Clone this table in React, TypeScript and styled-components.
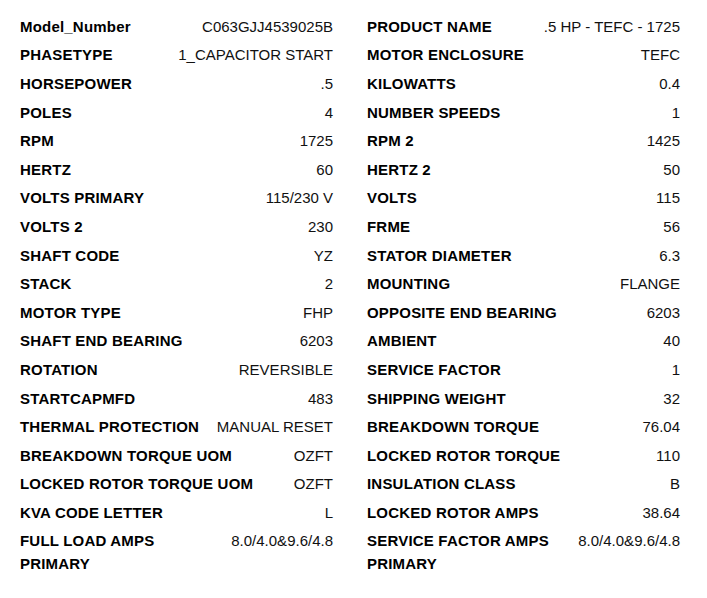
import React from "react";
import styled, { createGlobalStyle } from "styled-components";

const GlobalStyle = createGlobalStyle`
  body {
    margin: 0;
    background: #fff;
    font-family: "Liberation Sans", Arial, sans-serif;
  }
`;

const SpecSheet = styled.section`
  display: grid;
  grid-template-columns: 313px 313px;
  column-gap: 34px;
  padding: 12px 0 0 20px;
  width: 707px;
  box-sizing: border-box;
`;

const SpecColumn = styled.div`
  display: flex;
  flex-direction: column;
`;

const SpecRow = styled.div`
  display: flex;
  justify-content: space-between;
  align-items: flex-start;
  gap: 12px;
  padding: 2.8px 0;
  font-size: 15px;
  line-height: 23px;
`;

const SpecLabel = styled.span`
  font-weight: 700;
  color: #000;
  letter-spacing: 0.2px;
`;

const SpecValue = styled.span`
  color: #111;
  text-align: right;
  white-space: nowrap;
`;

type Spec = [string, string];

const left: Spec[] = [
  ["Model_Number", "C063GJJ4539025B"],
  ["PHASETYPE", "1_CAPACITOR START"],
  ["HORSEPOWER", ".5"],
  ["POLES", "4"],
  ["RPM", "1725"],
  ["HERTZ", "60"],
  ["VOLTS PRIMARY", "115/230 V"],
  ["VOLTS 2", "230"],
  ["SHAFT CODE", "YZ"],
  ["STACK", "2"],
  ["MOTOR TYPE", "FHP"],
  ["SHAFT END BEARING", "6203"],
  ["ROTATION", "REVERSIBLE"],
  ["STARTCAPMFD", "483"],
  ["THERMAL PROTECTION", "MANUAL RESET"],
  ["BREAKDOWN TORQUE UOM", "OZFT"],
  ["LOCKED ROTOR TORQUE UOM", "OZFT"],
  ["KVA CODE LETTER", "L"],
  ["FULL LOAD AMPS PRIMARY", "8.0/4.0&9.6/4.8"],
];

const right: Spec[] = [
  ["PRODUCT NAME", ".5 HP - TEFC - 1725"],
  ["MOTOR ENCLOSURE", "TEFC"],
  ["KILOWATTS", "0.4"],
  ["NUMBER SPEEDS", "1"],
  ["RPM 2", "1425"],
  ["HERTZ 2", "50"],
  ["VOLTS", "115"],
  ["FRME", "56"],
  ["STATOR DIAMETER", "6.3"],
  ["MOUNTING", "FLANGE"],
  ["OPPOSITE END BEARING", "6203"],
  ["AMBIENT", "40"],
  ["SERVICE FACTOR", "1"],
  ["SHIPPING WEIGHT", "32"],
  ["BREAKDOWN TORQUE", "76.04"],
  ["LOCKED ROTOR TORQUE", "110"],
  ["INSULATION CLASS", "B"],
  ["LOCKED ROTOR AMPS", "38.64"],
  ["SERVICE FACTOR AMPS PRIMARY", "8.0/4.0&9.6/4.8"],
];

const Column = ({ specs }: { specs: Spec[] }) => (
  <SpecColumn>
    {specs.map(([label, value]) => (
      <SpecRow key={label}>
        <SpecLabel>{label}</SpecLabel>
        <SpecValue>{value}</SpecValue>
      </SpecRow>
    ))}
  </SpecColumn>
);

const App = () => (
  <>
    <GlobalStyle />
    <SpecSheet>
      <Column specs={left} />
      <Column specs={right} />
    </SpecSheet>
  </>
);

export default App;
